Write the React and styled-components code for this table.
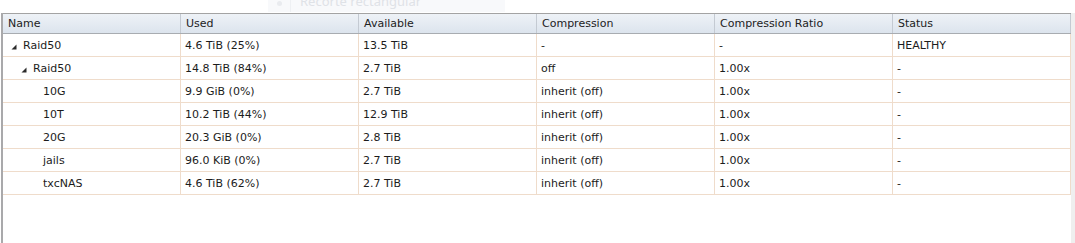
import React from 'react'
import styled, { createGlobalStyle } from 'styled-components'

const GlobalS = createGlobalStyle`
    html, body {
        margin: 0;
        padding: 0;
        background: #ffffff;
    }
    body {
        font-family: 'DejaVu Sans', Verdana, sans-serif;
    }
`

const columns = ['Name', 'Used', 'Available', 'Compression', 'Compression Ratio', 'Status']

const rows = [
    { name: 'Raid50', level: 0, open: true, used: '4.6 TiB (25%)', avail: '13.5 TiB', comp: '-', ratio: '-', status: 'HEALTHY' },
    { name: 'Raid50', level: 1, open: true, used: '14.8 TiB (84%)', avail: '2.7 TiB', comp: 'off', ratio: '1.00x', status: '-' },
    { name: '10G', level: 2, used: '9.9 GiB (0%)', avail: '2.7 TiB', comp: 'inherit (off)', ratio: '1.00x', status: '-' },
    { name: '10T', level: 2, used: '10.2 TiB (44%)', avail: '12.9 TiB', comp: 'inherit (off)', ratio: '1.00x', status: '-' },
    { name: '20G', level: 2, used: '20.3 GiB (0%)', avail: '2.8 TiB', comp: 'inherit (off)', ratio: '1.00x', status: '-' },
    { name: 'jails', level: 2, used: '96.0 KiB (0%)', avail: '2.7 TiB', comp: 'inherit (off)', ratio: '1.00x', status: '-' },
    { name: 'txcNAS', level: 2, used: '4.6 TiB (62%)', avail: '2.7 TiB', comp: 'inherit (off)', ratio: '1.00x', status: '-' },
]

const Expander = () => (
    <svg width="6" height="6" viewBox="0 0 6 6">
        <polygon points="5.5,0.5 5.5,5.5 0.5,5.5" fill="#2b2b2b" />
    </svg>
)

const App = () => {
    return (
        <PageS>
            <GlobalS />
            <TopStripS>
                <GhostMenuS>
                    <span className="dot" />
                    <span className="sep" />
                    <span className="label">Recorte rectangular</span>
                </GhostMenuS>
            </TopStripS>
            <FrameS>
                <RailS />
                <GridS>
                    <HeadRowS>
                        {columns.map((c) => (
                            <HeadCellS key={c}>{c}</HeadCellS>
                        ))}
                    </HeadRowS>
                    {rows.map((r, i) => (
                        <RowS key={i}>
                            <CellS>
                                <TreeS level={r.level}>
                                    <span className="arrow">{r.open && <Expander />}</span>
                                    {r.name}
                                </TreeS>
                            </CellS>
                            <CellS>{r.used}</CellS>
                            <CellS>{r.avail}</CellS>
                            <CellS>{r.comp}</CellS>
                            <CellS>{r.ratio}</CellS>
                            <CellS>{r.status}</CellS>
                        </RowS>
                    ))}
                </GridS>
                <ScrollStripS />
            </FrameS>
        </PageS>
    )
}

export default App

const PageS = styled.div`
    width: 1075px;
    height: 243px;
    display: flex;
    flex-direction: column;
    background: #ffffff;
    overflow: hidden;
`
const TopStripS = styled.div`
    position: relative;
    height: 13px;
    flex: none;
`
const GhostMenuS = styled.div`
    position: absolute;
    left: 268px;
    top: 0;
    width: 237px;
    height: 12px;
    background: #f8f9fb;
    overflow: hidden;
    > .dot {
        position: absolute;
        left: 9px;
        top: 1px;
        width: 5px;
        height: 5px;
        border-radius: 50%;
        background: #e9ebef;
    }
    > .sep {
        position: absolute;
        left: 22px;
        top: 0;
        width: 1px;
        height: 12px;
        background: #eef0f3;
    }
    > .label {
        position: absolute;
        left: 32px;
        top: -8px;
        font-family: 'Noto Sans', 'Open Sans', sans-serif;
        font-size: 13px;
        line-height: 18px;
        color: #dfe2e7;
        white-space: nowrap;
    }
`
const FrameS = styled.div`
    flex: 1;
    display: flex;
    min-height: 0;
`
const RailS = styled.div`
    width: 2px;
    margin-left: 1px;
    flex: none;
    background: #a9a9ab;
`
const GridS = styled.div`
    width: 1068px;
    flex: none;
    display: flex;
    flex-direction: column;
`
const ScrollStripS = styled.div`
    flex: 1;
    background: #efefef;
`
const HeadRowS = styled.div`
    display: grid;
    grid-template-columns: repeat(6, 178px);
    height: 19px;
    border-top: 1px solid #a3a3a3;
    border-bottom: 1px solid #a8acb1;
    background: linear-gradient(#eef2f7, #dce4ed);
`
const HeadCellS = styled.div`
    display: flex;
    align-items: center;
    padding-left: 5px;
    border-right: 1px solid #c4cad2;
    font-size: 11px;
    color: #222222;
    white-space: nowrap;
`
const RowS = styled.div`
    display: grid;
    grid-template-columns: repeat(6, 178px);
    height: 22px;
    border-bottom: 1px solid #efdccb;
`
const CellS = styled.div`
    display: flex;
    align-items: center;
    padding-left: 4px;
    border-right: 1px solid #efdccb;
    font-size: 11px;
    color: #1c1c1c;
    white-space: nowrap;
`
const TreeS = styled.div`
    display: flex;
    align-items: center;
    padding-left: ${(p) => 4 + p.level * 10}px;
    > .arrow {
        width: 12px;
        height: 6px;
        display: flex;
        flex: none;
        margin-top: 3px;
    }
`
